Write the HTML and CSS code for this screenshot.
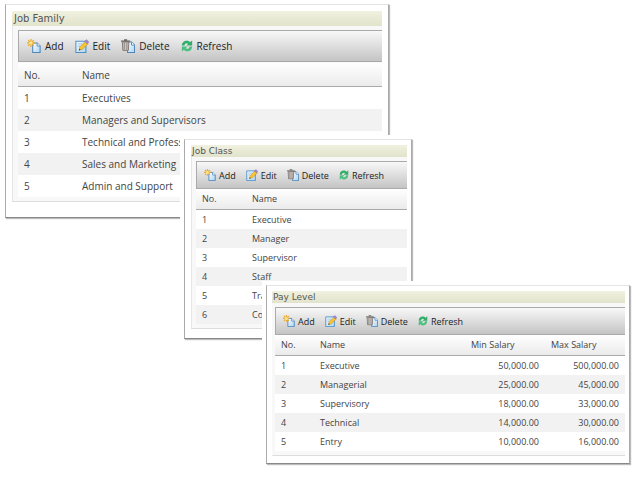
FILE: index.html
```
<!DOCTYPE html>
<html lang="en">
<head>
    <meta charset="UTF-8">
    <meta name="viewport" content="width=device-width, initial-scale=1.0">
    <title>Job Setup</title>
    <link rel="stylesheet" href="styles.css">
</head>
<body>
    <svg class="symbols" aria-hidden="true">
        <defs>
            <linearGradient id="paper" x1="0" y1="0" x2="1" y2="1">
                <stop offset="0" stop-color="#ffffff"/>
                <stop offset="1" stop-color="#a9d3f3"/>
            </linearGradient>
        </defs>
        <symbol id="icon-add" viewBox="0 0 16 16">
            <path d="M6.5 4.500h5l3.500 3.500v7.500h-8.500z" fill="url(#paper)" stroke="#4f86b8" stroke-width="1.200"/>
            <path d="M11.500 4.500v3.500h3.500" fill="#fff" stroke="#4f86b8"/>
            <path d="M4.500 0v9M0 4.500h9M1.300 1.300l6.400 6.400M7.700 1.300l-6.400 6.400" stroke="#eca92a" stroke-width="1.400"/>
            <circle cx="4.500" cy="4.500" r="2" fill="#ffe78a"/>
        </symbol>
        <symbol id="icon-edit" viewBox="0 0 16 16">
            <path d="M1 2.500h11.500v13h-11.500z" fill="url(#paper)" stroke="#4f8fc8" stroke-width="1.200"/>
            <path d="M3 5.500h5M3 8h3" stroke="#9bc0df"/>
            <path d="M4.500 13l1-4 6.500-6.500 3 2.800-6.500 6.500z" fill="#f8c52f" stroke="#b68b2b" stroke-width=".6"/>
            <path d="M11.300 2.800l1.800-2 2.700 2.500-1.900 2.100z" fill="#a98bd0" stroke="#7864a5" stroke-width=".6"/>
            <path d="M4.500 13l.5-2 1.500 1.400z" fill="#333"/>
        </symbol>
        <symbol id="icon-delete" viewBox="0 0 16 16">
            <path d="M7.500 3.500h4.500l3.500 3.500v8.500h-8z" fill="url(#paper)" stroke="#4f86b8" stroke-width="1.200"/>
            <path d="M12 3.500v3.500h3.500" fill="#fff" stroke="#4f86b8"/>
            <path d="M1.500 3.500h7.500l-.6 9.500h-6.300z" fill="#cdc5c0" stroke="#77706d"/>
            <path d="M3.800 4.500v7.500M6.700 4.500v7.500" stroke="#8a827e"/>
            <path d="M0 2.500h10.500M3.500 1h3.500" stroke="#6d6562" stroke-width="1.300"/>
        </symbol>
        <symbol id="icon-refresh" viewBox="0 0 14 16">
            <path d="M1 7.500c0-5.500 6.500-7.500 9.500-4l2.500-2v6h-6.500l2-2c-2-1.500-4-.5-4.500 2z" fill="#2fae68"/>
            <path d="M13 8.500c0 5.500-6.500 7.500-9.500 4l-2.500 2v-6h6.500l-2 2c2 1.500 4 .5 4.500-2z" fill="#4cc080"/>
        </symbol>
    </svg>

    <main class="desktop">
        <section class="window large job-family">
            <h2 class="title">Job Family</h2>
            <div class="grid">
                <div class="toolbar">
                    <button type="button"><svg class="icon"><use href="#icon-add"/></svg>Add</button>
                    <button type="button"><svg class="icon"><use href="#icon-edit"/></svg>Edit</button>
                    <button type="button"><svg class="icon"><use href="#icon-delete"/></svg>Delete</button>
                    <button type="button"><svg class="icon narrow"><use href="#icon-refresh"/></svg>Refresh</button>
                </div>
                <table>
                    <thead>
                        <tr><th class="no">No.</th><th>Name</th></tr>
                    </thead>
                    <tbody>
                        <tr><td>1</td><td>Executives</td></tr>
                        <tr><td>2</td><td>Managers and Supervisors</td></tr>
                        <tr><td>3</td><td>Technical and Professional</td></tr>
                        <tr><td>4</td><td>Sales and Marketing</td></tr>
                        <tr><td>5</td><td>Admin and Support</td></tr>
                    </tbody>
                </table>
            </div>
        </section>

        <section class="window job-class">
            <h2 class="title">Job Class</h2>
            <div class="grid">
                <div class="toolbar">
                    <button type="button"><svg class="icon"><use href="#icon-add"/></svg>Add</button>
                    <button type="button"><svg class="icon"><use href="#icon-edit"/></svg>Edit</button>
                    <button type="button"><svg class="icon"><use href="#icon-delete"/></svg>Delete</button>
                    <button type="button"><svg class="icon narrow"><use href="#icon-refresh"/></svg>Refresh</button>
                </div>
                <table>
                    <thead>
                        <tr><th class="no">No.</th><th>Name</th></tr>
                    </thead>
                    <tbody>
                        <tr><td>1</td><td>Executive</td></tr>
                        <tr><td>2</td><td>Manager</td></tr>
                        <tr><td>3</td><td>Supervisor</td></tr>
                        <tr><td>4</td><td>Staff</td></tr>
                        <tr><td>5</td><td>Trainee</td></tr>
                        <tr><td>6</td><td>Contractor</td></tr>
                    </tbody>
                </table>
            </div>
        </section>

        <section class="window pay-level">
            <h2 class="title">Pay Level</h2>
            <div class="grid">
                <div class="toolbar">
                    <button type="button"><svg class="icon"><use href="#icon-add"/></svg>Add</button>
                    <button type="button"><svg class="icon"><use href="#icon-edit"/></svg>Edit</button>
                    <button type="button"><svg class="icon"><use href="#icon-delete"/></svg>Delete</button>
                    <button type="button"><svg class="icon narrow"><use href="#icon-refresh"/></svg>Refresh</button>
                </div>
                <table>
                    <thead>
                        <tr><th class="no">No.</th><th>Name</th><th class="salary">Min Salary</th><th class="salary">Max Salary</th></tr>
                    </thead>
                    <tbody>
                        <tr><td>1</td><td>Executive</td><td class="amount">50,000.00</td><td class="amount">500,000.00</td></tr>
                        <tr><td>2</td><td>Managerial</td><td class="amount">25,000.00</td><td class="amount">45,000.00</td></tr>
                        <tr><td>3</td><td>Supervisory</td><td class="amount">18,000.00</td><td class="amount">33,000.00</td></tr>
                        <tr><td>4</td><td>Technical</td><td class="amount">14,000.00</td><td class="amount">30,000.00</td></tr>
                        <tr><td>5</td><td>Entry</td><td class="amount">10,000.00</td><td class="amount">16,000.00</td></tr>
                    </tbody>
                </table>
            </div>
        </section>
    </main>
</body>
</html>
```
FILE: styles.css
```
* {
    box-sizing: border-box;
}
body {
    margin: 0;
    background-color: #fff;
    color: #444;
    font-family: "Open Sans", "Noto Sans", sans-serif;
}
.symbols {
    position: absolute;
    width: 0;
    height: 0;
}
.desktop {
    position: relative;
    min-height: 100vh;
}

/* windows */
.window {
    --row: 19px;
    --text: 9px;
    --icon: 12px;
    position: absolute;
    padding: 5px 4px 7px 5px;
    background-color: #fff;
    border: 1px solid #aaa;
    border-top-color: #e4e4e4;
    border-bottom-color: #888;
    box-shadow: 1px 1px 1px #bbb, 0 0 0 4px #fff;
    font-size: var(--text);
}
.large {
    --row: 22px;
    --text: 10px;
    --icon: 14px;
    padding: 6px 6px 15px 6px;
}
.job-family {
    left: 5px;
    top: 4px;
    width: 384px;
}
.job-class {
    left: 184px;
    top: 139px;
    width: 228px;
    padding-bottom: 9px;
    padding-left: 6px;
}
.pay-level {
    left: 266px;
    top: 285px;
    width: 364px;
}
.title {
    margin: 0;
    padding-left: 1px;
    background: linear-gradient(#f0f1df, #e1e3cb);
    color: #555;
    font-family: "DejaVu Sans", sans-serif;
    font-size: 9px;
    font-weight: normal;
    line-height: 12px;
}
.large .title {
    padding-left: 2px;
    font-size: 10px;
    line-height: 15px;
}
.grid {
    padding: 4px 0 4px 4px;
    background-color: #f8f8f8;
    border-left: 1px solid #e6e6e6;
    border-bottom: 1px solid #ddd;
}
.large .grid {
    padding-left: 5px;
}
.pay-level .grid {
    padding-left: 2px;
    border-left-color: #f8f8f8;
}

/* toolbar */
.toolbar {
    display: flex;
    align-items: center;
    gap: 10px;
    height: 28px;
    padding-left: 7px;
    background: linear-gradient(#f8f8f8, #c4c4c4);
    border: 1px solid #aaa;
    border-right: 0;
}
.large .toolbar {
    gap: 11px;
    height: 32px;
    margin-bottom: 1px;
    padding-left: 8px;
}
.toolbar button {
    display: flex;
    align-items: center;
    gap: 3px;
    padding: 0;
    background: none;
    border: 0;
    color: #222;
    font: inherit;
    cursor: pointer;
}
.large .toolbar button {
    gap: 4px;
}
.icon {
    width: var(--icon);
    height: var(--icon);
}
.narrow {
    width: calc(var(--icon) - 2px);
}

/* tables */
table {
    width: 100%;
    table-layout: fixed;
    border-collapse: separate;
    border-spacing: 0;
    background-color: #fff;
}
th,
td {
    height: var(--row);
    padding: 0 6px;
    line-height: 14px;
    text-align: left;
    white-space: nowrap;
}
th {
    height: calc(var(--row) + 2px);
    background: linear-gradient(#fff, #ebebeb);
    border-bottom: 1px solid #aaa;
    font-weight: normal;
}
tbody tr:nth-child(even) {
    background-color: #f2f2f2;
}
.no {
    width: 50px;
}
.large .no {
    width: 58px;
}
.pay-level .no {
    width: 39px;
}
.salary {
    width: 80px;
}
.amount {
    text-align: right;
}
```
